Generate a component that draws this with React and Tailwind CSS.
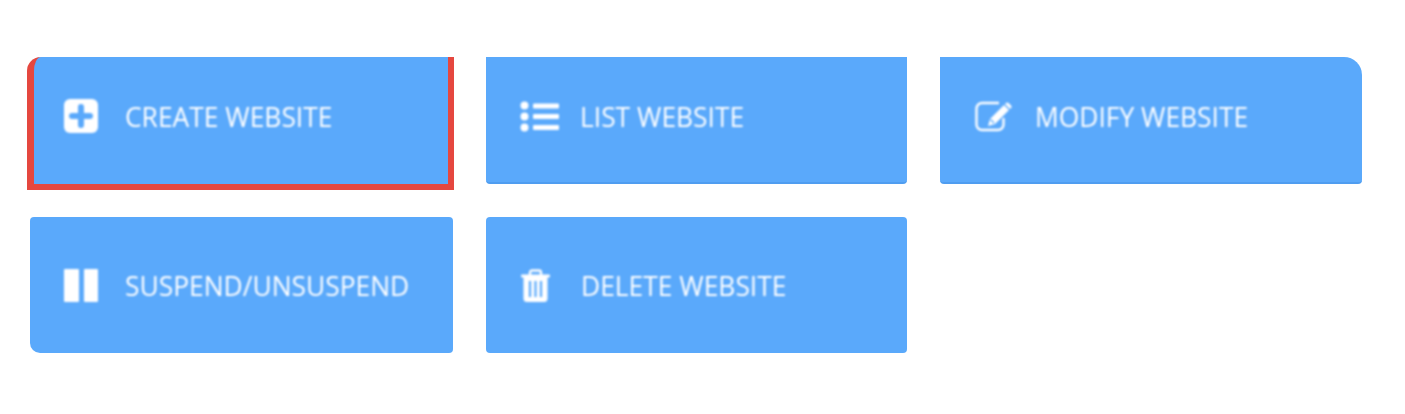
import React from 'react';

function PlusIcon() {
  return (
    <svg width="34" height="34" viewBox="0 0 34 34">
      <rect width="34" height="34" rx="6" fill="#fff" />
      <path d="M17 8v18M8 17h18" stroke="#5aa9fb" strokeWidth="6" strokeLinecap="round" />
    </svg>
  );
}

function ListIcon() {
  return (
    <svg width="39" height="31" viewBox="0 0 39 31">
      <circle cx="4.500" cy="4.500" r="4" fill="#fff" />
      <circle cx="4.500" cy="15.500" r="4" fill="#fff" />
      <circle cx="4.500" cy="26.500" r="4" fill="#fff" />
      <rect x="13" y="2.500" width="26" height="5" rx="1" fill="#fff" />
      <rect x="13" y="13" width="26" height="5" rx="1" fill="#fff" />
      <rect x="13" y="24" width="26" height="5" rx="1" fill="#fff" />
    </svg>
  );
}

function EditIcon() {
  return (
    <svg width="39" height="31" viewBox="0 0 39 31" fill="none">
      <path d="M24 2H7a5.500 5.500 0 0 0-5.500 5.500v16A5.500 5.500 0 0 0 7 29h16a5.500 5.500 0 0 0 5.500-5.500V17" stroke="#fff" strokeWidth="2.400" />
      <path d="M29 4l5 5-14 14-7 2 2-7z" fill="#fff" />
      <path d="M31 2a1.800 1.800 0 0 1 2.500 0l2.500 2.500a1.800 1.800 0 0 1 0 2.500l-1 1-5-5z" fill="#fff" />
      <path d="M15.500 18.500l3.500 3.500" stroke="#5aa9fb" strokeWidth="1.400" />
    </svg>
  );
}

function PauseIcon() {
  return (
    <svg width="34" height="33" viewBox="0 0 34 33">
      <rect width="15" height="33" rx="1" fill="#fff" />
      <rect x="20" width="14" height="33" rx="1" fill="#fff" />
    </svg>
  );
}

function TrashIcon() {
  return (
    <svg width="29" height="33" viewBox="0 0 29 33" fill="none">
      <path d="M9 7V3.500A2 2 0 0 1 11 1.500h7a2 2 0 0 1 2 2V7" stroke="#fff" strokeWidth="2.400" />
      <rect y="5.500" width="29" height="3" rx="1" fill="#fff" />
      <path d="M2.500 8h24v21.500a3.500 3.500 0 0 1-3.500 3.500H6a3.500 3.500 0 0 1-3.500-3.500z" fill="#fff" />
      <path d="M9 12v16M14.500 12v16M20 12v16" stroke="#5aa9fb" strokeWidth="2.200" />
    </svg>
  );
}

function Tile({ icon, label, className, iconWidth = 'w-[61px]' }) {
  return (
    <div className={`flex items-center bg-[#5aa9fb] ${className}`}>
      <div className={`${iconWidth} shrink-0 blur-[0.8px]`}>{icon}</div>
      <span className="mt-[2px] text-[26.4px] leading-[36px] text-white blur-[0.8px] whitespace-nowrap">{label}</span>
    </div>
  );
}

export default function App() {
  return (
    <div className="min-h-[414px] bg-white pt-[57px] pl-[30px] font-['Open_Sans',sans-serif]">
      <div className="grid grid-cols-[423px_421px_422px] grid-rows-[127px_136px] gap-x-[33px] gap-y-[33px]">
        <Tile
          icon={<PlusIcon />}
          label="CREATE WEBSITE"
          className="-ml-[3px] -mr-[1px] -mb-[6px] pl-[30px] pb-[9px] border-l-[7px] border-r-[6px] border-b-[6px] border-[#e5473f] rounded-tl-[14px]"
        />
        <Tile
          icon={<ListIcon />}
          label="LIST WEBSITE"
          iconWidth="w-[60px]"
          className="pl-[34px] pb-[7px] rounded-b-[4px] border-b-2 border-[#4f9df0]"
        />
        <Tile
          icon={<EditIcon />}
          label="MODIFY WEBSITE"
          iconWidth="w-[60px]"
          className="pl-[35px] pb-[7px] rounded-tr-[18px] rounded-b-[4px] border-b-2 border-[#4f9df0]"
        />
        <Tile icon={<PauseIcon />} label="SUSPEND/UNSUSPEND" className="pl-[34px] rounded-[4px] rounded-bl-[10px]" />
        <Tile icon={<TrashIcon />} label="DELETE WEBSITE" iconWidth="w-[60px]" className="pl-[35px] rounded-[4px]" />
      </div>
    </div>
  );
}
